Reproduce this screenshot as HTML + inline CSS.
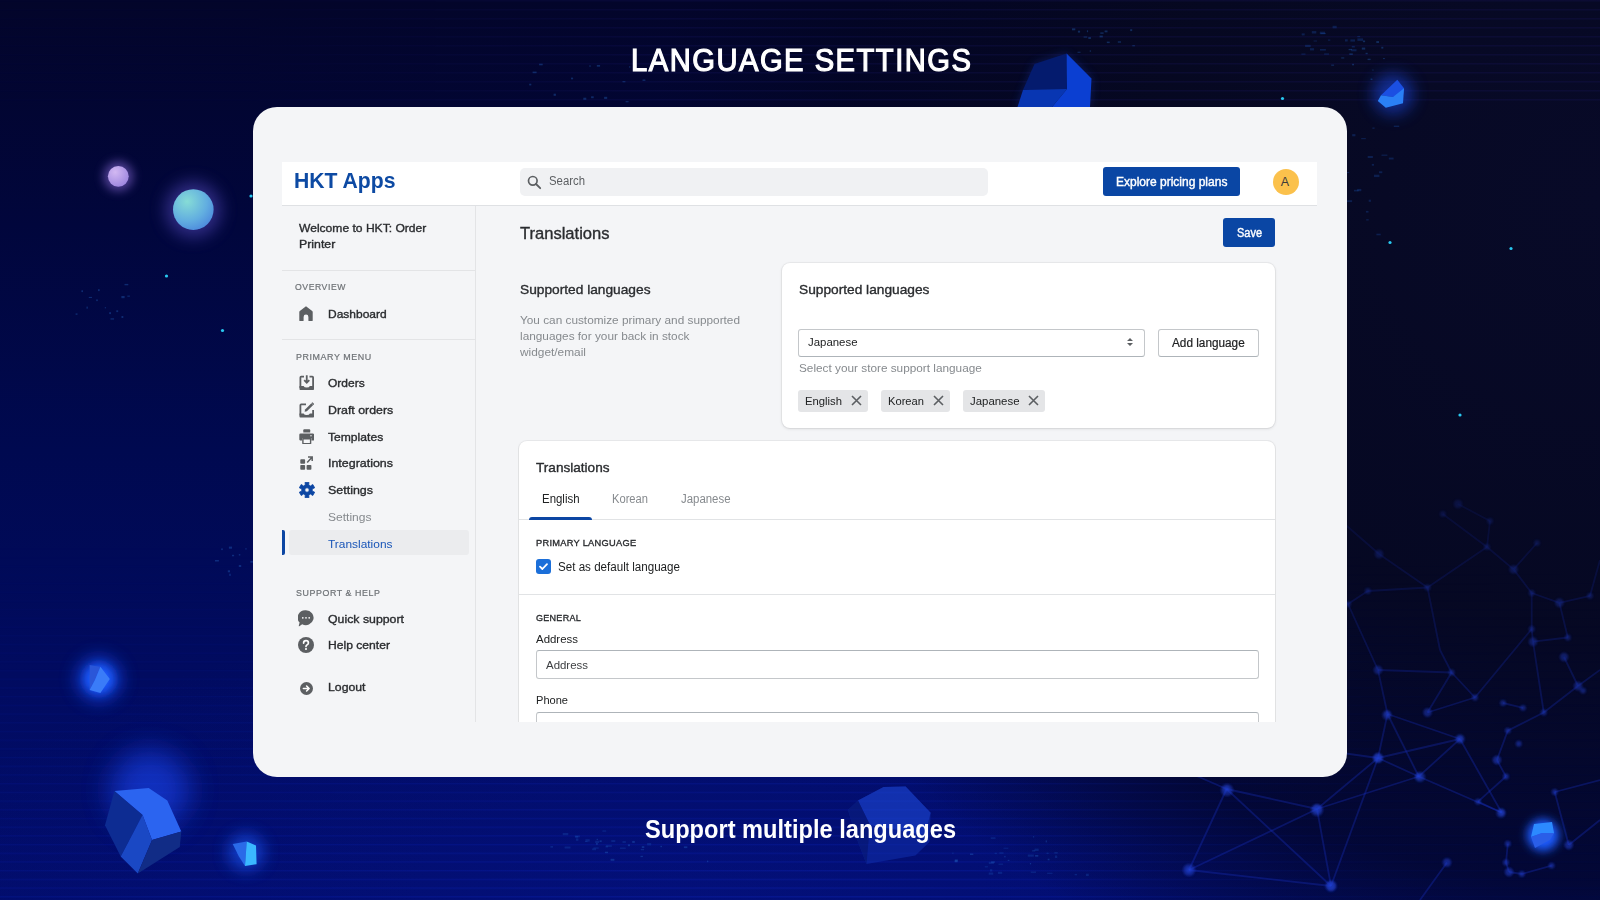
<!DOCTYPE html>
<html><head><meta charset="utf-8"><title>Language Settings</title>
<style>
html,body{margin:0;padding:0;}
body{width:1600px;height:900px;overflow:hidden;position:relative;font-family:"Liberation Sans",sans-serif;
background:#070b2c;}
.bg{position:absolute;left:0;top:0;width:1600px;height:900px;
background:radial-gradient(ellipse 800px 300px at 700px 900px, rgba(8,26,170,0.22) 0%, rgba(8,26,170,0) 100%),linear-gradient(180deg,#03052a 0%,#01063c 25%,#000950 50%,#010b60 75%,#020d6c 100%);}
.bg2{position:absolute;left:0;top:0;width:1600px;height:900px;
background:radial-gradient(ellipse 950px 850px at 1600px 200px, rgba(8,10,40,1) 0%, rgba(6,8,32,0.95) 50%, rgba(3,5,34,0.72) 80%, rgba(3,5,34,0) 100%);}
.t{position:absolute;white-space:nowrap;line-height:1;transform-origin:0 0;}
.abs{position:absolute;box-sizing:border-box;}
.panel{left:253px;top:107px;width:1094px;height:670px;border-radius:24px;background:#f4f5f7;}
.clip{left:282px;top:162px;width:1035px;height:560px;overflow:hidden;}
</style></head>
<body>
<div class="bg"></div>
<div class="bg2"></div>

<svg class="abs" style="left:0;top:0" width="1600" height="900" viewBox="0 0 1600 900">
<defs>
 <filter id="gl" x="-100%" y="-100%" width="300%" height="300%"><feGaussianBlur stdDeviation="8"/></filter>
 <filter id="nb" x="-50%" y="-50%" width="200%" height="200%"><feGaussianBlur stdDeviation="1.2"/></filter>
 <filter id="gl2" x="-100%" y="-100%" width="300%" height="300%"><feGaussianBlur stdDeviation="5"/></filter>
 <filter id="gl3" x="-100%" y="-100%" width="300%" height="300%"><feGaussianBlur stdDeviation="14"/></filter>
 <radialGradient id="sp1" cx="35%" cy="30%" r="75%"><stop offset="0" stop-color="#d2b8f2"/><stop offset="1" stop-color="#9d86df"/></radialGradient>
 <radialGradient id="sp2" cx="35%" cy="30%" r="80%"><stop offset="0" stop-color="#86dcd6"/><stop offset="0.6" stop-color="#62aee0"/><stop offset="1" stop-color="#4a86dc"/></radialGradient>
 <linearGradient id="stripes" x1="0" y1="0" x2="0" y2="1"><stop offset="0" stop-color="#fff"/><stop offset="1" stop-color="#fff"/></linearGradient>
 <linearGradient id="nmg" gradientUnits="userSpaceOnUse" x1="0" y1="470" x2="0" y2="760"><stop offset="0" stop-color="#fff" stop-opacity="0.25"/><stop offset="1" stop-color="#fff" stop-opacity="1"/></linearGradient>
 <mask id="nm" maskUnits="userSpaceOnUse" x="0" y="0" width="1600" height="900"><rect x="0" y="0" width="1600" height="900" fill="url(#nmg)"/></mask>
 <pattern id="hl" width="1600" height="8.7" patternUnits="userSpaceOnUse"><rect x="0" y="0" width="1600" height="1.4" fill="#1430e8"/></pattern>
 <linearGradient id="hlg" gradientUnits="userSpaceOnUse" x1="0" y1="540" x2="0" y2="900"><stop offset="0" stop-color="#fff" stop-opacity="0"/><stop offset="1" stop-color="#fff" stop-opacity="0.55"/></linearGradient>
 <linearGradient id="hlx" gradientUnits="userSpaceOnUse" x1="0" y1="0" x2="1600" y2="0"><stop offset="0" stop-color="#fff" stop-opacity="0.6"/><stop offset="0.55" stop-color="#fff" stop-opacity="1"/><stop offset="0.85" stop-color="#fff" stop-opacity="0.25"/><stop offset="1" stop-color="#fff" stop-opacity="0.1"/></linearGradient>
 <mask id="hlm" maskUnits="userSpaceOnUse" x="0" y="0" width="1600" height="900"><rect x="0" y="540" width="1600" height="360" fill="url(#hlg)"/></mask>
 <mask id="hlm2" maskUnits="userSpaceOnUse" x="0" y="0" width="1600" height="900"><rect x="0" y="0" width="1600" height="900" fill="url(#hlx)"/></mask>
 <linearGradient id="tsg" gradientUnits="userSpaceOnUse" x1="250" y1="0" x2="700" y2="0"><stop offset="0" stop-color="#fff" stop-opacity="0.15"/><stop offset="1" stop-color="#fff" stop-opacity="1"/></linearGradient>
 <mask id="tsm" maskUnits="userSpaceOnUse" x="0" y="0" width="1600" height="900"><rect x="0" y="0" width="1600" height="107" fill="url(#tsg)"/></mask>
 <pattern id="hlt" width="1600" height="9" patternUnits="userSpaceOnUse"><rect x="0" y="0" width="1600" height="1.5" fill="rgba(40,36,150,0.14)"/></pattern>
</defs>
<g mask="url(#hlm2)"><g mask="url(#hlm)"><rect x="0" y="540" width="1600" height="360" fill="url(#hl)" opacity="0.4"/></g></g><rect x="0" y="0" width="1600" height="107" fill="url(#hlt)" mask="url(#tsm)"/>
<g mask="url(#nm)"><g stroke="rgba(25,50,200,0.32)" stroke-width="1.8" fill="none"><line x1="1378" y1="670" x2="1451.6" y2="672.5"/><line x1="1451.6" y1="672.5" x2="1475" y2="697.5"/><line x1="1451.6" y1="672.5" x2="1427.5" y2="712.5"/><line x1="1427.5" y1="712.5" x2="1475" y2="697.5"/><line x1="1378" y1="670" x2="1387.5" y2="714"/><line x1="1387.5" y1="714" x2="1460" y2="739"/><line x1="1387.5" y1="714" x2="1378" y2="758"/><line x1="1387.5" y1="714" x2="1418.75" y2="776.5"/><line x1="1378" y1="758" x2="1460" y2="739"/><line x1="1460" y1="739" x2="1418.75" y2="776.5"/><line x1="1378" y1="758" x2="1418.75" y2="776.5"/><line x1="1460" y1="739" x2="1501.6" y2="812.5"/><line x1="1418.75" y1="776.5" x2="1501.6" y2="812.5"/><line x1="1378" y1="758" x2="1317" y2="809"/><line x1="1418.75" y1="776.5" x2="1317" y2="809"/><line x1="1226.6" y1="789" x2="1317" y2="809"/><line x1="1317" y1="809" x2="1189" y2="870"/><line x1="1317" y1="809" x2="1331" y2="886"/><line x1="1226.6" y1="789" x2="1331" y2="886"/><line x1="1189" y1="870" x2="1331" y2="886"/><line x1="1378" y1="758" x2="1331" y2="886"/><line x1="1226.6" y1="789" x2="1189" y2="870"/><line x1="1378" y1="670" x2="1348" y2="604"/><line x1="1378" y1="758" x2="1250" y2="740"/><line x1="1507.8" y1="730.6" x2="1496.9" y2="760"/><line x1="1496.9" y1="760" x2="1506" y2="776.5"/><line x1="1507.8" y1="730.6" x2="1543.75" y2="712.5"/><line x1="1543.75" y1="712.5" x2="1578" y2="686"/><line x1="1506" y1="776.5" x2="1478" y2="801.6"/><line x1="1478" y1="801.6" x2="1501.6" y2="812.5"/><line x1="1554.7" y1="792" x2="1568.75" y2="845"/><line x1="1554.7" y1="792" x2="1600" y2="780"/><line x1="1507.8" y1="843.75" x2="1506" y2="862.5"/><line x1="1506" y1="862.5" x2="1509" y2="872"/><line x1="1509" y1="872" x2="1521.9" y2="874"/><line x1="1521.9" y1="874" x2="1551.6" y2="865.6"/><line x1="1447" y1="862.5" x2="1420" y2="900"/><line x1="1503" y1="703" x2="1523" y2="707.8"/><line x1="1564" y1="657" x2="1578" y2="686"/><line x1="1578" y1="686" x2="1600" y2="670"/><line x1="1568.75" y1="845" x2="1600" y2="820"/><line x1="1487" y1="547" x2="1513.6" y2="569.4"/><line x1="1427.5" y1="587.5" x2="1367.8" y2="591"/><line x1="1487" y1="547" x2="1427.5" y2="587.5"/><line x1="1379" y1="554" x2="1427.5" y2="587.5"/><line x1="1513.6" y1="569.4" x2="1537" y2="543"/><line x1="1513.6" y1="569.4" x2="1531.7" y2="593"/><line x1="1531.7" y1="593" x2="1531.7" y2="629"/><line x1="1531.7" y1="629" x2="1533" y2="641.7"/><line x1="1531.7" y1="593" x2="1559.4" y2="602.8"/><line x1="1559.4" y1="602.8" x2="1590" y2="595.8"/><line x1="1559.4" y1="602.8" x2="1567.8" y2="637.5"/><line x1="1533" y1="641.7" x2="1567.8" y2="637.5"/><line x1="1490" y1="521" x2="1487" y2="547"/><line x1="1458" y1="504" x2="1490" y2="521"/><line x1="1442.8" y1="514" x2="1487" y2="547"/><line x1="1367.8" y1="591" x2="1348" y2="604"/><line x1="1427.5" y1="587.5" x2="1440" y2="650"/><line x1="1451.6" y1="672.5" x2="1440" y2="650"/><line x1="1531.7" y1="629" x2="1475" y2="697.5"/><line x1="1533" y1="641.7" x2="1543.75" y2="712.5"/><line x1="1590" y1="595.8" x2="1600" y2="560"/><line x1="1348" y1="604" x2="1300" y2="560"/><line x1="1300" y1="560" x2="1260" y2="520"/><line x1="1379" y1="554" x2="1340" y2="520"/><line x1="1226.6" y1="789" x2="1160" y2="760"/></g>
<g fill="rgba(35,65,215,0.5)" filter="url(#nb)"><circle cx="1378" cy="670" r="4.2"/><circle cx="1451.6" cy="672.5" r="2.9"/><circle cx="1475" cy="697.5" r="2.9"/><circle cx="1427.5" cy="712.5" r="4.2"/><circle cx="1387.5" cy="714" r="2.9"/><circle cx="1460" cy="739" r="2.9"/><circle cx="1378" cy="758" r="4.2"/><circle cx="1418.75" cy="776.5" r="2.9"/><circle cx="1226.6" cy="789" r="2.9"/><circle cx="1317" cy="809" r="4.2"/><circle cx="1501.6" cy="812.5" r="2.9"/><circle cx="1189" cy="870" r="2.9"/><circle cx="1331" cy="886" r="4.2"/><circle cx="1507.8" cy="730.6" r="2.9"/><circle cx="1518.75" cy="743.75" r="2.9"/><circle cx="1496.9" cy="760" r="4.2"/><circle cx="1506" cy="776.5" r="2.9"/><circle cx="1543.75" cy="712.5" r="2.9"/><circle cx="1578" cy="686" r="4.2"/><circle cx="1478" cy="801.6" r="2.9"/><circle cx="1554.7" cy="792" r="2.9"/><circle cx="1568.75" cy="845" r="4.2"/><circle cx="1507.8" cy="843.75" r="2.9"/><circle cx="1506" cy="862.5" r="2.9"/><circle cx="1509" cy="872" r="4.2"/><circle cx="1521.9" cy="874" r="2.9"/><circle cx="1551.6" cy="865.6" r="2.9"/><circle cx="1447" cy="862.5" r="4.2"/><circle cx="1503" cy="703" r="2.9"/><circle cx="1523" cy="707.8" r="2.9"/><circle cx="1564" cy="657" r="4.2"/><circle cx="1583" cy="690.6" r="2.9"/><circle cx="1487" cy="547" r="2.9"/><circle cx="1513.6" cy="569.4" r="4.2"/><circle cx="1427.5" cy="587.5" r="2.9"/><circle cx="1367.8" cy="591" r="2.9"/><circle cx="1379" cy="554" r="4.2"/><circle cx="1537" cy="543" r="2.9"/><circle cx="1531.7" cy="593" r="2.9"/><circle cx="1559.4" cy="602.8" r="4.2"/><circle cx="1590" cy="595.8" r="2.9"/><circle cx="1531.7" cy="629" r="2.9"/><circle cx="1533" cy="641.7" r="4.2"/><circle cx="1567.8" cy="637.5" r="2.9"/><circle cx="1490" cy="521" r="2.9"/><circle cx="1458" cy="504" r="4.2"/><circle cx="1442.8" cy="514" r="2.9"/><circle cx="1348" cy="604" r="2.9"/></g><g fill="rgba(40,70,220,0.45)" filter="url(#nb)"><circle cx="1227" cy="790" r="6"/><circle cx="1317" cy="810" r="6"/><circle cx="1189" cy="870" r="6"/><circle cx="1331" cy="886" r="5.5"/><circle cx="1378" cy="758" r="5"/><circle cx="1420" cy="777" r="5"/><circle cx="1387" cy="715" r="4.5"/><circle cx="1460" cy="739" r="4.5"/><circle cx="1501" cy="813" r="4.5"/></g></g>
<circle cx="166.5" cy="276" r="1.6" fill="#28c8f0"/><circle cx="222.5" cy="330.5" r="1.6" fill="#28c8f0"/><circle cx="251" cy="196" r="1.6" fill="#28c8f0"/><circle cx="1282.5" cy="98.5" r="1.6" fill="#28c8f0"/><circle cx="1390" cy="242.5" r="1.6" fill="#28c8f0"/><circle cx="1511" cy="248.5" r="1.6" fill="#28c8f0"/><circle cx="1460" cy="415" r="1.6" fill="#28c8f0"/><circle cx="1224" cy="363" r="1.6" fill="#28c8f0"/><rect x="529.2" y="83.7" width="2.1" height="1.7" fill="rgba(40,110,200,0.35)"/><rect x="589.5" y="65.1" width="1.0" height="2.0" fill="rgba(40,110,200,0.35)"/><rect x="532.6" y="71.6" width="4.0" height="1.6" fill="rgba(40,110,200,0.35)"/><rect x="622.5" y="81.1" width="2.9" height="1.2" fill="rgba(40,110,200,0.35)"/><rect x="591.1" y="96.3" width="2.6" height="1.9" fill="rgba(40,110,200,0.35)"/><rect x="596.8" y="65.0" width="3.3" height="1.7" fill="rgba(40,110,200,0.35)"/><rect x="539.1" y="63.7" width="3.6" height="1.6" fill="rgba(40,110,200,0.35)"/><rect x="604.1" y="96.8" width="3.1" height="2.1" fill="rgba(40,110,200,0.35)"/><rect x="553.6" y="93.7" width="2.3" height="2.1" fill="rgba(40,110,200,0.35)"/><rect x="629.0" y="66.3" width="1.4" height="1.3" fill="rgba(40,110,200,0.35)"/><rect x="642.5" y="79.5" width="2.9" height="1.4" fill="rgba(40,110,200,0.35)"/><rect x="571.0" y="77.6" width="2.1" height="1.7" fill="rgba(40,110,200,0.35)"/><rect x="583.3" y="97.7" width="3.0" height="2.1" fill="rgba(40,110,200,0.35)"/><rect x="625.6" y="101.1" width="3.0" height="1.2" fill="rgba(40,110,200,0.35)"/><rect x="1182.5" y="177.9" width="3.7" height="1.7" fill="rgba(40,110,200,0.35)"/><rect x="1169.2" y="132.7" width="3.5" height="1.7" fill="rgba(40,110,200,0.35)"/><rect x="1130.6" y="123.8" width="3.6" height="2.2" fill="rgba(40,110,200,0.35)"/><rect x="1113.0" y="168.0" width="2.2" height="1.2" fill="rgba(40,110,200,0.35)"/><rect x="1131.5" y="166.1" width="3.6" height="1.1" fill="rgba(40,110,200,0.35)"/><rect x="1160.3" y="122.7" width="3.2" height="1.4" fill="rgba(40,110,200,0.35)"/><rect x="1184.3" y="178.8" width="2.5" height="2.2" fill="rgba(40,110,200,0.35)"/><rect x="1132.9" y="124.6" width="2.8" height="1.0" fill="rgba(40,110,200,0.35)"/><rect x="1122.8" y="144.5" width="2.8" height="1.2" fill="rgba(40,110,200,0.35)"/><rect x="1108.8" y="172.1" width="1.9" height="2.2" fill="rgba(40,110,200,0.35)"/><rect x="1185.7" y="142.7" width="2.4" height="1.6" fill="rgba(40,110,200,0.35)"/><rect x="1162.9" y="155.7" width="2.7" height="1.7" fill="rgba(40,110,200,0.35)"/><rect x="1189.7" y="150.4" width="2.3" height="1.9" fill="rgba(40,110,200,0.35)"/><rect x="1126.4" y="138.1" width="3.9" height="1.6" fill="rgba(40,110,200,0.35)"/><rect x="1362.9" y="40.5" width="2.2" height="1.7" fill="rgba(40,110,200,0.35)"/><rect x="1331.2" y="64.6" width="2.9" height="1.1" fill="rgba(40,110,200,0.35)"/><rect x="1367.6" y="58.7" width="3.0" height="1.4" fill="rgba(40,110,200,0.35)"/><rect x="1372.4" y="69.5" width="1.1" height="1.1" fill="rgba(40,110,200,0.35)"/><rect x="1370.6" y="78.5" width="1.8" height="1.5" fill="rgba(40,110,200,0.35)"/><rect x="1365.6" y="52.8" width="2.1" height="1.4" fill="rgba(40,110,200,0.35)"/><rect x="1352.1" y="63.8" width="1.9" height="1.5" fill="rgba(40,110,200,0.35)"/><rect x="1376.3" y="41.1" width="2.7" height="1.9" fill="rgba(40,110,200,0.35)"/><rect x="1348.6" y="48.9" width="3.4" height="1.3" fill="rgba(40,110,200,0.35)"/><rect x="1341.2" y="57.4" width="3.1" height="1.1" fill="rgba(40,110,200,0.35)"/><rect x="1349.3" y="53.4" width="3.5" height="1.5" fill="rgba(40,110,200,0.35)"/><rect x="1381.3" y="46.8" width="2.0" height="1.8" fill="rgba(40,110,200,0.35)"/><rect x="1383.1" y="58.0" width="1.7" height="1.1" fill="rgba(40,110,200,0.35)"/><rect x="1361.8" y="47.6" width="3.4" height="2.0" fill="rgba(40,110,200,0.35)"/><rect x="1227.9" y="368.9" width="3.4" height="1.8" fill="rgba(40,110,200,0.35)"/><rect x="1271.4" y="372.3" width="1.4" height="1.4" fill="rgba(40,110,200,0.35)"/><rect x="1270.6" y="368.6" width="2.0" height="1.5" fill="rgba(40,110,200,0.35)"/><rect x="1244.4" y="375.5" width="3.8" height="1.2" fill="rgba(40,110,200,0.35)"/><rect x="1215.3" y="402.2" width="3.6" height="2.2" fill="rgba(40,110,200,0.35)"/><rect x="1245.4" y="402.5" width="3.8" height="1.3" fill="rgba(40,110,200,0.35)"/><rect x="1267.2" y="396.8" width="3.0" height="1.6" fill="rgba(40,110,200,0.35)"/><rect x="1235.2" y="372.1" width="1.7" height="1.1" fill="rgba(40,110,200,0.35)"/><rect x="1256.2" y="369.4" width="3.4" height="1.1" fill="rgba(40,110,200,0.35)"/><rect x="1278.3" y="389.7" width="3.8" height="2.1" fill="rgba(40,110,200,0.35)"/><rect x="1278.0" y="383.8" width="1.0" height="1.9" fill="rgba(40,110,200,0.35)"/><rect x="1227.0" y="370.0" width="3.0" height="1.6" fill="rgba(40,110,200,0.35)"/><rect x="1244.0" y="402.0" width="2.8" height="1.4" fill="rgba(40,110,200,0.35)"/><rect x="1232.7" y="398.1" width="2.4" height="1.9" fill="rgba(40,110,200,0.35)"/><rect x="632.2" y="840.9" width="2.6" height="2.0" fill="rgba(40,110,200,0.35)"/><rect x="610.6" y="858.8" width="3.8" height="2.0" fill="rgba(40,110,200,0.35)"/><rect x="688.8" y="835.2" width="2.9" height="2.0" fill="rgba(40,110,200,0.35)"/><rect x="596.0" y="843.1" width="1.8" height="1.6" fill="rgba(40,110,200,0.35)"/><rect x="640.8" y="849.2" width="3.3" height="1.0" fill="rgba(40,110,200,0.35)"/><rect x="596.6" y="838.8" width="1.4" height="1.1" fill="rgba(40,110,200,0.35)"/><rect x="707.0" y="860.6" width="1.3" height="1.6" fill="rgba(40,110,200,0.35)"/><rect x="627.9" y="844.4" width="2.1" height="1.8" fill="rgba(40,110,200,0.35)"/><rect x="660.4" y="845.8" width="1.6" height="1.4" fill="rgba(40,110,200,0.35)"/><rect x="604.9" y="851.7" width="3.1" height="1.5" fill="rgba(40,110,200,0.35)"/><rect x="599.6" y="840.4" width="2.1" height="1.7" fill="rgba(40,110,200,0.35)"/><rect x="683.9" y="846.4" width="3.4" height="1.7" fill="rgba(40,110,200,0.35)"/><rect x="641.8" y="846.2" width="2.5" height="1.8" fill="rgba(40,110,200,0.35)"/><rect x="640.5" y="855.8" width="2.4" height="1.3" fill="rgba(40,110,200,0.35)"/><rect x="1004.3" y="855.9" width="1.2" height="1.5" fill="rgba(40,110,200,0.35)"/><rect x="991.1" y="861.4" width="3.8" height="1.4" fill="rgba(40,110,200,0.35)"/><rect x="1047.7" y="858.7" width="1.8" height="1.6" fill="rgba(40,110,200,0.35)"/><rect x="954.8" y="859.4" width="3.0" height="2.1" fill="rgba(40,110,200,0.35)"/><rect x="1035.1" y="855.0" width="3.2" height="1.7" fill="rgba(40,110,200,0.35)"/><rect x="952.4" y="852.6" width="1.0" height="1.2" fill="rgba(40,110,200,0.35)"/><rect x="1032.9" y="836.3" width="1.3" height="1.1" fill="rgba(40,110,200,0.35)"/><rect x="1045.7" y="840.4" width="1.1" height="2.0" fill="rgba(40,110,200,0.35)"/><rect x="954.6" y="860.3" width="3.0" height="2.0" fill="rgba(40,110,200,0.35)"/><rect x="1054.3" y="852.4" width="3.4" height="1.0" fill="rgba(40,110,200,0.35)"/><rect x="1032.1" y="850.3" width="3.1" height="1.1" fill="rgba(40,110,200,0.35)"/><rect x="1029.9" y="863.0" width="1.2" height="1.4" fill="rgba(40,110,200,0.35)"/><rect x="1007.7" y="859.8" width="1.7" height="1.2" fill="rgba(40,110,200,0.35)"/><rect x="970.0" y="853.5" width="3.3" height="1.5" fill="rgba(40,110,200,0.35)"/><rect x="232.0" y="554.8" width="2.1" height="1.5" fill="rgba(40,110,200,0.35)"/><rect x="215.0" y="560.0" width="3.9" height="1.5" fill="rgba(40,110,200,0.35)"/><rect x="254.8" y="543.0" width="3.1" height="1.9" fill="rgba(40,110,200,0.35)"/><rect x="250.4" y="560.9" width="2.5" height="1.8" fill="rgba(40,110,200,0.35)"/><rect x="263.8" y="542.5" width="1.3" height="1.9" fill="rgba(40,110,200,0.35)"/><rect x="265.0" y="560.9" width="2.3" height="1.9" fill="rgba(40,110,200,0.35)"/><rect x="221.2" y="548.4" width="1.6" height="1.7" fill="rgba(40,110,200,0.35)"/><rect x="228.9" y="546.6" width="3.1" height="2.1" fill="rgba(40,110,200,0.35)"/><rect x="227.8" y="570.3" width="2.2" height="2.0" fill="rgba(40,110,200,0.35)"/><rect x="245.1" y="548.4" width="1.7" height="1.0" fill="rgba(40,110,200,0.35)"/><rect x="238.8" y="554.1" width="1.5" height="1.4" fill="rgba(40,110,200,0.35)"/><rect x="229.3" y="573.7" width="1.4" height="2.2" fill="rgba(40,110,200,0.35)"/><rect x="238.8" y="565.0" width="2.4" height="2.0" fill="rgba(40,110,200,0.35)"/><rect x="259.3" y="562.9" width="2.4" height="1.9" fill="rgba(40,110,200,0.35)"/><rect x="121.4" y="296.0" width="3.2" height="2.2" fill="rgba(40,110,200,0.35)"/><rect x="98.0" y="289.2" width="1.7" height="1.9" fill="rgba(40,110,200,0.35)"/><rect x="110.5" y="318.3" width="3.6" height="1.3" fill="rgba(40,110,200,0.35)"/><rect x="81.4" y="290.3" width="1.6" height="1.8" fill="rgba(40,110,200,0.35)"/><rect x="121.5" y="316.0" width="1.8" height="2.0" fill="rgba(40,110,200,0.35)"/><rect x="88.8" y="296.9" width="3.2" height="1.1" fill="rgba(40,110,200,0.35)"/><rect x="75.6" y="313.4" width="1.9" height="1.4" fill="rgba(40,110,200,0.35)"/><rect x="104.8" y="307.0" width="1.0" height="1.4" fill="rgba(40,110,200,0.35)"/><rect x="96.2" y="299.4" width="1.6" height="1.7" fill="rgba(40,110,200,0.35)"/><rect x="127.3" y="295.6" width="2.6" height="1.1" fill="rgba(40,110,200,0.35)"/><rect x="86.5" y="306.6" width="1.3" height="2.1" fill="rgba(40,110,200,0.35)"/><rect x="124.5" y="283.9" width="3.8" height="1.4" fill="rgba(40,110,200,0.35)"/><rect x="116.3" y="310.3" width="1.9" height="1.8" fill="rgba(40,110,200,0.35)"/><rect x="109.2" y="312.2" width="1.8" height="1.9" fill="rgba(40,110,200,0.35)"/><rect x="1132.3" y="45.2" width="2.6" height="1.1" fill="rgba(40,110,200,0.35)"/><rect x="1099.6" y="35.6" width="3.2" height="1.8" fill="rgba(40,110,200,0.35)"/><rect x="1104.6" y="30.5" width="2.9" height="1.8" fill="rgba(40,110,200,0.35)"/><rect x="1077.5" y="51.7" width="3.0" height="1.1" fill="rgba(40,110,200,0.35)"/><rect x="1130.2" y="29.2" width="2.0" height="1.9" fill="rgba(40,110,200,0.35)"/><rect x="1106.8" y="41.6" width="2.9" height="1.5" fill="rgba(40,110,200,0.35)"/><rect x="1086.9" y="30.3" width="1.2" height="1.9" fill="rgba(40,110,200,0.35)"/><rect x="1117.8" y="41.3" width="3.2" height="1.4" fill="rgba(40,110,200,0.35)"/><rect x="1083.6" y="36.5" width="3.6" height="1.1" fill="rgba(40,110,200,0.35)"/><rect x="1100.3" y="32.4" width="3.3" height="1.4" fill="rgba(40,110,200,0.35)"/><rect x="1088.3" y="37.1" width="2.6" height="1.9" fill="rgba(40,110,200,0.35)"/><rect x="1089.7" y="50.4" width="1.3" height="1.3" fill="rgba(40,110,200,0.35)"/><rect x="1072.0" y="28.4" width="3.3" height="1.9" fill="rgba(40,110,200,0.35)"/><rect x="1077.9" y="30.7" width="2.2" height="1.9" fill="rgba(40,110,200,0.35)"/><rect x="1361.2" y="138.1" width="4.6" height="1.1" fill="rgba(30,90,190,0.28)"/><rect x="1371.8" y="163.9" width="2.2" height="1.8" fill="rgba(30,90,190,0.28)"/><rect x="1346.9" y="172.0" width="2.3" height="1.1" fill="rgba(30,90,190,0.28)"/><rect x="1366.2" y="219.2" width="2.5" height="1.3" fill="rgba(30,90,190,0.28)"/><rect x="1376.4" y="233.7" width="4.3" height="1.6" fill="rgba(30,90,190,0.28)"/><rect x="1393.8" y="125.6" width="5.4" height="1.4" fill="rgba(30,90,190,0.28)"/><rect x="1352.2" y="134.1" width="3.2" height="2.2" fill="rgba(30,90,190,0.28)"/><rect x="1354.0" y="189.8" width="4.6" height="1.6" fill="rgba(30,90,190,0.28)"/><rect x="1372.4" y="127.5" width="2.2" height="1.3" fill="rgba(30,90,190,0.28)"/><rect x="1379.0" y="171.3" width="3.3" height="1.9" fill="rgba(30,90,190,0.28)"/><rect x="1367.7" y="156.0" width="5.2" height="2.0" fill="rgba(30,90,190,0.28)"/><rect x="1357.2" y="188.9" width="4.1" height="2.3" fill="rgba(30,90,190,0.28)"/><rect x="1381.5" y="154.6" width="5.9" height="1.2" fill="rgba(30,90,190,0.28)"/><rect x="1365.9" y="210.9" width="2.6" height="1.7" fill="rgba(30,90,190,0.28)"/><rect x="1347.0" y="200.2" width="5.1" height="1.9" fill="rgba(30,90,190,0.28)"/><rect x="1388.8" y="157.6" width="4.8" height="1.9" fill="rgba(30,90,190,0.28)"/><rect x="1374.0" y="174.7" width="5.4" height="2.4" fill="rgba(30,90,190,0.28)"/><rect x="1368.7" y="199.7" width="2.2" height="2.1" fill="rgba(30,90,190,0.28)"/><rect x="1188.8" y="149.7" width="5.3" height="1.4" fill="rgba(30,90,190,0.28)"/><rect x="1173.1" y="136.7" width="2.1" height="1.7" fill="rgba(30,90,190,0.28)"/><rect x="1160.1" y="114.7" width="2.2" height="2.2" fill="rgba(30,90,190,0.28)"/><rect x="1157.8" y="119.9" width="3.6" height="2.3" fill="rgba(30,90,190,0.28)"/><rect x="1154.8" y="128.0" width="4.2" height="2.3" fill="rgba(30,90,190,0.28)"/><rect x="1199.2" y="144.6" width="3.1" height="1.6" fill="rgba(30,90,190,0.28)"/><rect x="1171.5" y="145.4" width="5.8" height="1.2" fill="rgba(30,90,190,0.28)"/><rect x="1160.6" y="119.3" width="2.9" height="1.7" fill="rgba(30,90,190,0.28)"/><rect x="1185.3" y="120.5" width="2.0" height="1.6" fill="rgba(30,90,190,0.28)"/><rect x="1172.2" y="132.7" width="5.8" height="2.0" fill="rgba(30,90,190,0.28)"/><rect x="1180.9" y="134.7" width="4.7" height="1.1" fill="rgba(30,90,190,0.28)"/><rect x="1204.0" y="141.2" width="5.5" height="2.2" fill="rgba(30,90,190,0.28)"/><rect x="1173.5" y="126.0" width="2.4" height="2.0" fill="rgba(30,90,190,0.28)"/><rect x="1153.7" y="112.7" width="2.8" height="1.2" fill="rgba(30,90,190,0.28)"/><rect x="1170.4" y="112.1" width="2.0" height="1.2" fill="rgba(30,90,190,0.28)"/><rect x="1156.1" y="124.5" width="2.1" height="2.3" fill="rgba(30,90,190,0.28)"/><rect x="1186.8" y="115.9" width="3.0" height="1.5" fill="rgba(30,90,190,0.28)"/><rect x="1171.8" y="114.9" width="5.4" height="2.5" fill="rgba(30,90,190,0.28)"/><rect x="1328.0" y="39.5" width="2.3" height="1.2" fill="rgba(30,90,190,0.28)"/><rect x="1320.6" y="32.9" width="5.3" height="1.2" fill="rgba(30,90,190,0.28)"/><rect x="1301.4" y="53.5" width="4.1" height="1.2" fill="rgba(30,90,190,0.28)"/><rect x="1332.6" y="25.8" width="4.1" height="2.5" fill="rgba(30,90,190,0.28)"/><rect x="1351.8" y="45.9" width="3.0" height="1.6" fill="rgba(30,90,190,0.28)"/><rect x="1310.0" y="48.2" width="4.1" height="2.2" fill="rgba(30,90,190,0.28)"/><rect x="1319.8" y="31.7" width="5.2" height="2.5" fill="rgba(30,90,190,0.28)"/><rect x="1351.2" y="49.2" width="5.3" height="2.1" fill="rgba(30,90,190,0.28)"/><rect x="1313.6" y="40.5" width="3.4" height="1.0" fill="rgba(30,90,190,0.28)"/><rect x="1301.7" y="33.4" width="3.0" height="2.0" fill="rgba(30,90,190,0.28)"/><rect x="1357.4" y="38.4" width="5.7" height="2.5" fill="rgba(30,90,190,0.28)"/><rect x="1357.3" y="35.9" width="2.9" height="1.3" fill="rgba(30,90,190,0.28)"/><rect x="1311.8" y="31.1" width="4.5" height="2.4" fill="rgba(30,90,190,0.28)"/><rect x="1350.4" y="39.4" width="4.6" height="2.2" fill="rgba(30,90,190,0.28)"/><rect x="1305.1" y="44.8" width="5.6" height="2.2" fill="rgba(30,90,190,0.28)"/><rect x="1345.0" y="39.3" width="2.7" height="2.2" fill="rgba(30,90,190,0.28)"/><rect x="1320.0" y="49.0" width="5.9" height="1.6" fill="rgba(30,90,190,0.28)"/><rect x="1324.1" y="53.4" width="4.9" height="1.3" fill="rgba(30,90,190,0.28)"/><rect x="562.7" y="833.0" width="5.6" height="2.2" fill="rgba(30,90,190,0.28)"/><rect x="564.6" y="846.5" width="5.9" height="2.0" fill="rgba(30,90,190,0.28)"/><rect x="585.0" y="841.0" width="2.5" height="1.0" fill="rgba(30,90,190,0.28)"/><rect x="647.1" y="843.0" width="4.1" height="2.4" fill="rgba(30,90,190,0.28)"/><rect x="593.4" y="847.4" width="5.3" height="1.3" fill="rgba(30,90,190,0.28)"/><rect x="575.2" y="835.9" width="3.0" height="1.9" fill="rgba(30,90,190,0.28)"/><rect x="575.9" y="838.4" width="2.5" height="2.4" fill="rgba(30,90,190,0.28)"/><rect x="585.4" y="839.2" width="4.3" height="2.4" fill="rgba(30,90,190,0.28)"/><rect x="592.1" y="848.4" width="4.0" height="1.8" fill="rgba(30,90,190,0.28)"/><rect x="602.4" y="830.4" width="3.8" height="1.3" fill="rgba(30,90,190,0.28)"/><rect x="550.4" y="846.0" width="2.7" height="1.7" fill="rgba(30,90,190,0.28)"/><rect x="622.5" y="841.1" width="3.3" height="1.8" fill="rgba(30,90,190,0.28)"/><rect x="605.5" y="845.7" width="2.4" height="1.8" fill="rgba(30,90,190,0.28)"/><rect x="574.8" y="835.5" width="5.1" height="1.8" fill="rgba(30,90,190,0.28)"/><rect x="606.2" y="845.2" width="5.6" height="1.7" fill="rgba(30,90,190,0.28)"/><rect x="611.3" y="840.1" width="4.0" height="2.0" fill="rgba(30,90,190,0.28)"/><rect x="595.2" y="840.7" width="3.9" height="2.4" fill="rgba(30,90,190,0.28)"/><rect x="619.9" y="847.5" width="5.8" height="1.4" fill="rgba(30,90,190,0.28)"/><rect x="1047.1" y="872.7" width="5.4" height="1.2" fill="rgba(30,90,190,0.28)"/><rect x="994.6" y="852.7" width="2.3" height="1.4" fill="rgba(30,90,190,0.28)"/><rect x="988.8" y="861.8" width="5.1" height="2.3" fill="rgba(30,90,190,0.28)"/><rect x="998.5" y="863.6" width="4.6" height="1.2" fill="rgba(30,90,190,0.28)"/><rect x="1085.9" y="873.7" width="2.9" height="2.4" fill="rgba(30,90,190,0.28)"/><rect x="1027.8" y="854.5" width="6.0" height="2.2" fill="rgba(30,90,190,0.28)"/><rect x="999.4" y="852.3" width="4.1" height="1.5" fill="rgba(30,90,190,0.28)"/><rect x="1003.5" y="847.7" width="4.9" height="1.0" fill="rgba(30,90,190,0.28)"/><rect x="1046.5" y="852.6" width="2.1" height="1.5" fill="rgba(30,90,190,0.28)"/><rect x="1054.9" y="855.5" width="2.3" height="2.5" fill="rgba(30,90,190,0.28)"/><rect x="1074.6" y="873.9" width="2.4" height="1.4" fill="rgba(30,90,190,0.28)"/><rect x="984.8" y="866.2" width="3.1" height="1.2" fill="rgba(30,90,190,0.28)"/><rect x="1030.7" y="871.5" width="5.3" height="1.4" fill="rgba(30,90,190,0.28)"/><rect x="997.9" y="871.8" width="4.3" height="2.1" fill="rgba(30,90,190,0.28)"/><rect x="990.7" y="837.3" width="4.8" height="1.6" fill="rgba(30,90,190,0.28)"/><rect x="988.7" y="872.5" width="4.5" height="2.2" fill="rgba(30,90,190,0.28)"/><rect x="990.0" y="869.2" width="2.3" height="2.3" fill="rgba(30,90,190,0.28)"/><rect x="1034.5" y="848.6" width="4.2" height="2.4" fill="rgba(30,90,190,0.28)"/>
<!-- spheres -->
<circle cx="118.3" cy="176.3" r="15" fill="#8a6ad8" opacity="0.55" filter="url(#gl2)"/>
<circle cx="118.3" cy="176.3" r="10.4" fill="url(#sp1)"/>
<circle cx="193.3" cy="209.6" r="28" fill="#5b4fc8" opacity="0.5" filter="url(#gl)"/>
<circle cx="193.3" cy="209.6" r="20.3" fill="url(#sp2)"/>
<!-- top crystal -->
<polygon points="1066.6,53.5 1034.5,64 1017.5,107 1090,107 1091.5,78.5" fill="#1a3fc8" opacity="0.35" filter="url(#gl2)"/>
<polygon points="1066.6,53.5 1034.5,64 1023,90 1067,89" fill="#041b6e"/>
<polygon points="1066.6,53.5 1091.5,78.5 1090,107 1052,107 1067,89" fill="#0b3fd2"/>
<polygon points="1023,90 1067,89 1052,107 1017.5,107" fill="#0836b2"/>
<!-- top right small crystal -->
<circle cx="1393" cy="94" r="20" fill="#1a4ef0" opacity="0.55" filter="url(#gl)"/>
<polygon points="1397.3,79.8 1404,88.2 1403,95 1393,97 1381,95.3" fill="#1b4fe2"/>
<polygon points="1381,95.3 1393,97 1404,88.2 1403,103.3 1385.8,107.8 1377.8,101" fill="#2a80f6"/>
<!-- left crystal -->
<circle cx="99" cy="679" r="24" fill="#1450ff" opacity="0.5" filter="url(#gl)"/><circle cx="99" cy="679" r="15" fill="#1a5cff" opacity="1" filter="url(#gl2)"/>
<polygon points="89.6,665 100.4,666.7 95,680 89.6,690" fill="#2a56d8"/>
<polygon points="100.4,666.7 109.8,679 100.4,693 89.6,690 95,680" fill="#3a7cf8"/>
<!-- big crystal -->
<circle cx="150" cy="790" r="40" fill="#1a4cff" opacity="0.55" filter="url(#gl3)"/>
<polygon points="114.4,791 148.7,788 167.3,800.5 181.3,831.6 152,840 142.6,815" fill="#2b64f0"/>
<polygon points="114.4,791 142.6,815 120.7,856.5 105,825.3" fill="#0d2c92"/>
<polygon points="142.6,815 152,840 137.8,873.6 120.7,856.5" fill="#1a48c4"/>
<polygon points="152,840 181.3,831.6 179.8,847 137.8,873.6" fill="#112c86"/>
<!-- small crystal bottom -->
<circle cx="246" cy="852" r="18" fill="#1a5cff" opacity="0.6" filter="url(#gl)"/>
<polygon points="232.7,844 246.7,841.5 245,866 238.9,856.5" fill="#2a6ae8"/>
<polygon points="246.7,841.5 256,845.6 256.6,864.2 245,866" fill="#3ab8ff"/>
<!-- dim crystal -->
<g opacity="0.6">
<polygon points="883.6,787 905.6,786.5 930.6,812.8 929.4,842 915.4,855.6 866.5,864 856.7,838.5 848,810 858,800.6" fill="#0f2ca8"/>
<polygon points="883.6,787 905.6,786.5 930.6,812.8 925,835 870,825 858,800.6" fill="#1d48d8"/>
<polygon points="858,800.6 870,825 866.5,864 856.7,838.5 848,810" fill="#0a1f80"/>
</g>
<!-- bottom right crystal -->
<circle cx="1543" cy="835" r="16" fill="#1a5cff" opacity="1" filter="url(#gl2)"/>
<polygon points="1534,824 1552,822 1554,833 1550,836 1542,833 1531,837" fill="#2c8aff"/>
<polygon points="1531,837 1542,833 1554,833 1550,840 1535,848" fill="#2a5ee8"/>
</svg>

<div class="abs panel"></div>
<!-- header -->
<div class="abs" style="left:282px;top:162px;width:1035px;height:44px;background:#fff;border-bottom:1px solid #dfe1e4;"></div>
<div class="abs" style="left:520px;top:168px;width:468px;height:28px;background:#f0f1f3;border-radius:5px;"></div>
<svg class="abs" style="left:527px;top:175px" width="15" height="15" viewBox="0 0 15 15"><circle cx="5.8" cy="5.8" r="4.3" fill="none" stroke="#5c5f62" stroke-width="1.7"/><line x1="9" y1="9" x2="13.2" y2="13.2" stroke="#5c5f62" stroke-width="1.8" stroke-linecap="round"/></svg>
<div class="abs" style="left:1103px;top:167px;width:137px;height:29px;background:#0a46a4;border-radius:3px;"></div>
<div class="abs" style="left:1272.5px;top:169px;width:26px;height:26px;background:#fbc14c;border-radius:50%;"></div>
<!-- sidebar -->
<div class="abs" style="left:475px;top:206px;width:1px;height:516px;background:#e3e4e6;"></div>
<div class="abs" style="left:282px;top:270px;width:193px;height:1px;background:#e3e4e6;"></div>
<div class="abs" style="left:282px;top:339px;width:193px;height:1px;background:#e3e4e6;"></div>
<div class="abs" style="left:289px;top:530px;width:180px;height:25px;background:#ebecee;border-radius:3px;"></div>
<div class="abs" style="left:282px;top:530px;width:3px;height:25px;background:#0c46a3;border-radius:0 2px 2px 0;"></div>

<svg class="abs" style="left:299px;top:305.5px" width="14" height="15.5" viewBox="0 0 14 15.5"><path d="M7 0.3 L13.2 4.9 Q13.7 5.3 13.7 5.9 V14.2 Q13.7 15.2 12.7 15.2 H10.2 Q9.4 15.2 9.4 14.4 V11 Q9.4 8.6 7 8.6 Q4.6 8.6 4.6 11 V14.4 Q4.6 15.2 3.8 15.2 H1.3 Q0.3 15.2 0.3 14.2 V5.9 Q0.3 5.3 0.8 4.9 Z" fill="#5c5f62"/></svg>
<svg class="abs" style="left:298.5px;top:375px" width="15.5" height="15.5" viewBox="0 0 15.5 15.5"><path d="M5 1.6 H2.2 Q1.4 1.6 1.4 2.4 V13 M14.1 13 V2.4 Q14.1 1.6 13.3 1.6 H10.5" fill="none" stroke="#5c5f62" stroke-width="1.8"/><path d="M7.75 0.3 V7.6 M5.2 5.2 L7.75 7.8 L10.3 5.2" fill="none" stroke="#5c5f62" stroke-width="1.8"/><path d="M0.5 11 H4.6 Q5.3 12.6 7.75 12.6 Q10.2 12.6 10.9 11 H15 V14.3 Q15 15.1 14.2 15.1 H1.3 Q0.5 15.1 0.5 14.3 Z" fill="#5c5f62"/></svg>
<svg class="abs" style="left:298.5px;top:401.5px" width="15.5" height="16" viewBox="0 0 15.5 16"><path d="M7 2.4 H2.2 Q1.4 2.4 1.4 3.2 V13.5 M14.1 13.5 V8" fill="none" stroke="#5c5f62" stroke-width="1.8"/><path d="M5.6 9.8 L6.1 7.6 L12.4 1.3 L14.2 3.1 L7.9 9.3 Z" fill="#5c5f62"/><path d="M13 0.6 L14.9 2.5" stroke="#5c5f62" stroke-width="1.2"/><path d="M0.5 11.5 H4.6 Q5.3 13.1 7.75 13.1 Q10.2 13.1 10.9 11.5 H15 V14.8 Q15 15.6 14.2 15.6 H1.3 Q0.5 15.6 0.5 14.8 Z" fill="#5c5f62"/></svg>
<svg class="abs" style="left:298.5px;top:429px" width="15.5" height="15" viewBox="0 0 15.5 15"><path d="M4.3 1.2 Q4.3 0.3 5.2 0.3 H10.3 Q11.2 0.3 11.2 1.2 V3.4 H4.3 Z" fill="#5c5f62"/><path d="M1.6 4.4 H13.9 Q15.2 4.4 15.2 5.7 V10.6 Q15.2 11.4 14.4 11.4 H12.4 V9 H3.1 V11.4 H1.1 Q0.3 11.4 0.3 10.6 V5.7 Q0.3 4.4 1.6 4.4 Z M12 6 Q11.3 6 11.3 6.7 Q11.3 7.4 12 7.4 Q12.7 7.4 12.7 6.7 Q12.7 6 12 6 Z" fill="#5c5f62" fill-rule="evenodd"/><path d="M3.9 9.8 H11.6 V14.2 Q11.6 14.8 11 14.8 H4.5 Q3.9 14.8 3.9 14.2 Z" fill="none" stroke="#5c5f62" stroke-width="1.4"/></svg>
<svg class="abs" style="left:300px;top:455.5px" width="13" height="14" viewBox="0 0 13 14"><rect x="0.3" y="3.2" width="4.8" height="4.6" rx="0.8" fill="#5c5f62"/><rect x="0.3" y="8.9" width="4.8" height="4.8" rx="0.8" fill="#5c5f62"/><rect x="6.6" y="8.9" width="4.8" height="4.8" rx="0.8" fill="#5c5f62"/><path d="M7.2 6.6 L12 1.2 M8 0.9 H12.2 V5.1" fill="none" stroke="#5c5f62" stroke-width="1.5"/></svg>
<svg class="abs" style="left:298.5px;top:482px" width="16" height="16" viewBox="-8 -8 16 16"><path fill="#0c46a3" fill-rule="evenodd" stroke="#0c46a3" stroke-width="0.8" stroke-linejoin="round" d="M-1.73,-5.01 L-1.94,-7.76 L1.94,-7.76 L1.73,-5.01 L3.48,-4.00 L5.75,-5.56 L7.69,-2.21 L5.20,-1.01 L5.20,1.01 L7.69,2.21 L5.75,5.56 L3.48,4.00 L1.73,5.01 L1.94,7.76 L-1.94,7.76 L-1.73,5.01 L-3.48,4.00 L-5.75,5.56 L-7.69,2.21 L-5.20,1.01 L-5.20,-1.01 L-7.69,-2.21 L-5.75,-5.56 L-3.48,-4.00 Z M0,-2.2 A2.2,2.2 0 1 0 0,2.2 A2.2,2.2 0 1 0 0,-2.2 Z"/></svg>
<svg class="abs" style="left:298px;top:610px" width="16" height="16.5" viewBox="0 0 16 16.5"><path d="M8 0.3 A7.7 7.4 0 1 1 4.2 14.2 L1.3 16.2 Q0.6 16.5 0.8 15.7 L1.6 12.6 A7.7 7.4 0 0 1 8 0.3 Z" fill="#5c5f62"/><circle cx="4.8" cy="7.8" r="0.85" fill="#fff"/><circle cx="8" cy="7.8" r="0.85" fill="#fff"/><circle cx="11.2" cy="7.8" r="0.85" fill="#fff"/></svg>
<svg class="abs" style="left:298px;top:637px" width="16" height="16" viewBox="0 0 16 16"><circle cx="8" cy="8" r="8" fill="#5c5f62"/><path d="M5.6 6.1 Q5.6 3.7 8 3.7 Q10.4 3.7 10.4 5.9 Q10.4 7.2 8.9 7.9 Q8 8.3 8 9.4" fill="none" stroke="#fff" stroke-width="1.7" stroke-linecap="round"/><circle cx="8" cy="12" r="1.05" fill="#fff"/></svg>
<svg class="abs" style="left:299.8px;top:681.5px" width="13" height="13" viewBox="0 0 13 13"><circle cx="6.5" cy="6.5" r="6.5" fill="#5c5f62"/><path d="M3.4 6.5 H9 M6.6 4 L9.1 6.5 L6.6 9" fill="none" stroke="#fff" stroke-width="1.6" stroke-linecap="round" stroke-linejoin="round"/></svg>

<!-- main -->
<div class="abs" style="left:1223px;top:218px;width:52px;height:29px;background:#0a46a4;border-radius:3px;"></div>
<div class="abs" style="left:782px;top:263px;width:493px;height:165px;background:#fff;border-radius:8px;box-shadow:0 0 0 1px rgba(63,63,68,0.05),0 1px 3px 0 rgba(63,63,68,0.15);"></div>
<div class="abs" style="left:798px;top:328.5px;width:346.5px;height:28px;background:#fff;border:1px solid #c4c7ca;border-bottom-color:#aeb4b9;border-radius:3px;"></div>
<svg class="abs" style="left:1126px;top:337px" width="8" height="10" viewBox="0 0 8 10"><path d="M4 1 L7 4 H1 Z M4 9 L1 6 H7 Z" fill="#5c5f62"/></svg>
<div class="abs" style="left:1158px;top:328.5px;width:101px;height:28px;background:#fff;border:1px solid #c4c7ca;border-bottom-color:#aeb4b9;border-radius:3px;"></div>
<div class="abs" style="left:798px;top:389.5px;width:70px;height:22px;background:#e4e5e7;border-radius:3px;"></div>
<div class="abs" style="left:881px;top:389.5px;width:69px;height:22px;background:#e4e5e7;border-radius:3px;"></div>
<div class="abs" style="left:963px;top:389.5px;width:82px;height:22px;background:#e4e5e7;border-radius:3px;"></div>
<svg class="abs" style="left:851px;top:395px" width="11" height="11" viewBox="0 0 11 11"><path d="M1 1 L10 10 M10 1 L1 10" stroke="#5c5f62" stroke-width="1.6"/></svg>
<svg class="abs" style="left:933px;top:395px" width="11" height="11" viewBox="0 0 11 11"><path d="M1 1 L10 10 M10 1 L1 10" stroke="#5c5f62" stroke-width="1.6"/></svg>
<svg class="abs" style="left:1028px;top:395px" width="11" height="11" viewBox="0 0 11 11"><path d="M1 1 L10 10 M10 1 L1 10" stroke="#5c5f62" stroke-width="1.6"/></svg>
<!-- card 2 clipped -->
<div class="abs" style="left:518px;top:440px;width:758px;height:282px;overflow:hidden;">
  <div class="abs" style="left:1px;top:1px;width:756px;height:320px;background:#fff;border-radius:8px;box-shadow:0 0 0 1px rgba(63,63,68,0.05),0 1px 3px 0 rgba(63,63,68,0.15);"></div>
  <div class="abs" style="left:1px;top:79px;width:756px;height:1px;background:#e1e3e5;"></div>
  <div class="abs" style="left:11px;top:77px;width:63px;height:3px;background:#0c46a3;border-radius:3px 3px 0 0;"></div>
  <div class="abs" style="left:1px;top:154px;width:756px;height:1px;background:#e1e3e5;"></div>
  <div class="abs" style="left:17.5px;top:210px;width:723.5px;height:29px;background:#fff;border:1px solid #c4c7ca;border-top-color:#aeb4b9;border-radius:3px;"></div>
  <div class="abs" style="left:17.5px;top:271.5px;width:723.5px;height:29px;background:#fff;border:1px solid #c4c7ca;border-top-color:#aeb4b9;border-radius:3px;"></div>
</div>
<div class="abs" style="left:536px;top:559px;width:15px;height:15px;background:#1b6fd9;border-radius:3px;"></div>
<svg class="abs" style="left:536px;top:559px" width="15" height="15" viewBox="0 0 15 15"><path d="M4 7.6 L6.4 10 L11 5.2" fill="none" stroke="#fff" stroke-width="1.8" stroke-linecap="round" stroke-linejoin="round"/></svg>
<div class="t" id="h1" style="left:631.00px;top:45.42px;font-size:31.4px;font-weight:400;color:#ffffff;letter-spacing:1.6px;transform:scaleX(0.9296);-webkit-text-stroke:1.2px #fff;">LANGUAGE SETTINGS</div>
<div class="t" id="h2" style="left:644.50px;top:816.84px;font-size:25px;font-weight:700;color:#ffffff;letter-spacing:0px;transform:scaleX(0.9448);">Support multiple languages</div>
<div class="t" id="logo" style="left:294.00px;top:169.72px;font-size:21.6px;font-weight:700;color:#0d4aa3;letter-spacing:0px;transform:scaleX(0.9801);">HKT Apps</div>
<div class="t" id="search" style="left:549.40px;top:175.34px;font-size:12px;font-weight:400;color:#5c5f62;letter-spacing:0px;transform:scaleX(0.9466);">Search</div>
<div class="t" id="explore" style="left:1115.80px;top:175.59px;font-size:12px;font-weight:400;color:#ffffff;letter-spacing:0px;transform:scaleX(0.9999);-webkit-text-stroke:0.4px #fff;">Explore pricing plans</div>
<div class="t" id="avatar" style="left:1280.80px;top:175.92px;font-size:12.5px;font-weight:400;color:#3b3b3b;letter-spacing:0px;">A</div>
<div class="t" id="welcome1" style="left:298.70px;top:221.78px;font-size:11.6px;font-weight:400;color:#2a2c2f;letter-spacing:0px;transform:scaleX(1.0417);-webkit-text-stroke:0.35px #2a2c2f;">Welcome to HKT: Order</div>
<div class="t" id="welcome2" style="left:298.70px;top:238.18px;font-size:11.6px;font-weight:400;color:#2a2c2f;letter-spacing:0px;transform:scaleX(1.0628);-webkit-text-stroke:0.35px #2a2c2f;">Printer</div>
<div class="t" id="ov" style="left:295.30px;top:282.04px;font-size:9.4px;font-weight:400;color:#6d7175;letter-spacing:0.6px;transform:scaleX(0.9244);-webkit-text-stroke:0.2px #6d7175;">OVERVIEW</div>
<div class="t" id="dash" style="left:327.70px;top:307.80px;font-size:11.7px;font-weight:400;color:#2a2c2f;letter-spacing:0px;transform:scaleX(1.0264);-webkit-text-stroke:0.35px #2a2c2f;">Dashboard</div>
<div class="t" id="pm" style="left:295.50px;top:352.04px;font-size:9.4px;font-weight:400;color:#6d7175;letter-spacing:0.6px;transform:scaleX(0.9499);-webkit-text-stroke:0.2px #6d7175;">PRIMARY MENU</div>
<div class="t" id="orders" style="left:327.80px;top:376.90px;font-size:11.7px;font-weight:400;color:#2a2c2f;letter-spacing:0px;transform:scaleX(1.0270);-webkit-text-stroke:0.35px #2a2c2f;">Orders</div>
<div class="t" id="draft" style="left:327.80px;top:403.80px;font-size:11.7px;font-weight:400;color:#2a2c2f;letter-spacing:0px;transform:scaleX(1.0567);-webkit-text-stroke:0.35px #2a2c2f;">Draft orders</div>
<div class="t" id="tmpl" style="left:327.80px;top:430.50px;font-size:11.7px;font-weight:400;color:#2a2c2f;letter-spacing:0px;transform:scaleX(1.0360);-webkit-text-stroke:0.35px #2a2c2f;">Templates</div>
<div class="t" id="integ" style="left:327.80px;top:457.30px;font-size:11.7px;font-weight:400;color:#2a2c2f;letter-spacing:0px;transform:scaleX(1.0642);-webkit-text-stroke:0.35px #2a2c2f;">Integrations</div>
<div class="t" id="sett" style="left:327.80px;top:484.10px;font-size:11.7px;font-weight:400;color:#2a2c2f;letter-spacing:0px;transform:scaleX(1.0655);-webkit-text-stroke:0.35px #2a2c2f;">Settings</div>
<div class="t" id="sett2" style="left:327.80px;top:510.80px;font-size:11.7px;font-weight:400;color:#868a8e;letter-spacing:0px;transform:scaleX(1.0300);">Settings</div>
<div class="t" id="trans2" style="left:327.80px;top:537.50px;font-size:11.7px;font-weight:400;color:#1a56b8;letter-spacing:0px;transform:scaleX(1.0200);">Translations</div>
<div class="t" id="sh" style="left:295.50px;top:587.79px;font-size:9.4px;font-weight:400;color:#6d7175;letter-spacing:0.6px;transform:scaleX(0.9458);-webkit-text-stroke:0.2px #6d7175;">SUPPORT &amp; HELP</div>
<div class="t" id="qs" style="left:327.80px;top:612.60px;font-size:11.7px;font-weight:400;color:#2a2c2f;letter-spacing:0px;transform:scaleX(1.0540);-webkit-text-stroke:0.35px #2a2c2f;">Quick support</div>
<div class="t" id="hc" style="left:327.80px;top:639.30px;font-size:11.7px;font-weight:400;color:#2a2c2f;letter-spacing:0px;transform:scaleX(1.0371);-webkit-text-stroke:0.35px #2a2c2f;">Help center</div>
<div class="t" id="lo" style="left:327.80px;top:681.30px;font-size:11.7px;font-weight:400;color:#2a2c2f;letter-spacing:0px;transform:scaleX(1.0490);-webkit-text-stroke:0.35px #2a2c2f;">Logout</div>
<div class="t" id="title" style="left:520.00px;top:225.78px;font-size:16.8px;font-weight:400;color:#2a2c2f;letter-spacing:0px;transform:scaleX(0.9859);-webkit-text-stroke:0.35px #2a2c2f;">Translations</div>
<div class="t" id="save" style="left:1236.70px;top:227.04px;font-size:12px;font-weight:400;color:#ffffff;letter-spacing:0px;transform:scaleX(0.9138);-webkit-text-stroke:0.4px #fff;">Save</div>
<div class="t" id="sl" style="left:519.50px;top:283.33px;font-size:13.2px;font-weight:400;color:#2a2c2f;letter-spacing:0px;transform:scaleX(1.0407);-webkit-text-stroke:0.35px #2a2c2f;">Supported languages</div>
<div class="t" id="d1" style="left:519.50px;top:314.52px;font-size:11.5px;font-weight:400;color:#868a8e;letter-spacing:0px;transform:scaleX(1.0262);">You can customize primary and supported</div>
<div class="t" id="d2" style="left:519.50px;top:330.77px;font-size:11.5px;font-weight:400;color:#868a8e;letter-spacing:0px;transform:scaleX(1.0277);">languages for your back in stock</div>
<div class="t" id="d3" style="left:519.50px;top:347.02px;font-size:11.5px;font-weight:400;color:#868a8e;letter-spacing:0px;transform:scaleX(1.0325);">widget/email</div>
<div class="t" id="c1h" style="left:798.60px;top:282.83px;font-size:13.2px;font-weight:400;color:#2a2c2f;letter-spacing:0px;transform:scaleX(1.0400);-webkit-text-stroke:0.35px #2a2c2f;">Supported languages</div>
<div class="t" id="jp" style="left:808.00px;top:336.87px;font-size:11.5px;font-weight:400;color:#202223;letter-spacing:0px;transform:scaleX(0.9925);">Japanese</div>
<div class="t" id="addl" style="left:1172.00px;top:336.54px;font-size:12px;font-weight:400;color:#202223;letter-spacing:0px;transform:scaleX(0.9814);-webkit-text-stroke:0.2px #202223;">Add language</div>
<div class="t" id="hint" style="left:798.60px;top:363.29px;font-size:11px;font-weight:400;color:#868a8e;letter-spacing:0px;transform:scaleX(1.0715);">Select your store support language</div>
<div class="t" id="tag1" style="left:805.00px;top:395.10px;font-size:11.7px;font-weight:400;color:#202223;letter-spacing:0px;transform:scaleX(0.9650);">English</div>
<div class="t" id="tag2" style="left:887.50px;top:395.10px;font-size:11.7px;font-weight:400;color:#202223;letter-spacing:0px;transform:scaleX(0.9548);">Korean</div>
<div class="t" id="tag3" style="left:969.50px;top:395.10px;font-size:11.7px;font-weight:400;color:#202223;letter-spacing:0px;transform:scaleX(0.9763);">Japanese</div>
<div class="t" id="c2h" style="left:536.40px;top:461.00px;font-size:13px;font-weight:400;color:#2a2c2f;letter-spacing:0px;transform:scaleX(1.0451);-webkit-text-stroke:0.35px #2a2c2f;">Translations</div>
<div class="t" id="tab1" style="left:542.00px;top:492.84px;font-size:12px;font-weight:400;color:#202223;letter-spacing:0px;transform:scaleX(0.9528);">English</div>
<div class="t" id="tab2" style="left:612.40px;top:492.84px;font-size:12px;font-weight:400;color:#868a8e;letter-spacing:0px;transform:scaleX(0.9302);">Korean</div>
<div class="t" id="tab3" style="left:681.00px;top:492.84px;font-size:12px;font-weight:400;color:#868a8e;letter-spacing:0px;transform:scaleX(0.9511);">Japanese</div>
<div class="t" id="prim" style="left:536.00px;top:537.70px;font-size:9.8px;font-weight:400;color:#2a2c2f;letter-spacing:0.3px;transform:scaleX(0.9449);-webkit-text-stroke:0.35px #2a2c2f;">PRIMARY LANGUAGE</div>
<div class="t" id="setdef" style="left:558.40px;top:560.84px;font-size:12px;font-weight:400;color:#202223;letter-spacing:0px;transform:scaleX(0.9674);">Set as default language</div>
<div class="t" id="gen" style="left:535.70px;top:613.10px;font-size:9.8px;font-weight:400;color:#2a2c2f;letter-spacing:0.3px;transform:scaleX(0.9195);-webkit-text-stroke:0.35px #2a2c2f;">GENERAL</div>
<div class="t" id="addrl" style="left:535.70px;top:633.00px;font-size:11.7px;font-weight:400;color:#202223;letter-spacing:0px;transform:scaleX(0.9792);">Address</div>
<div class="t" id="addrp" style="left:546.00px;top:658.70px;font-size:11.7px;font-weight:400;color:#3d3f42;letter-spacing:0px;transform:scaleX(0.9792);">Address</div>
<div class="t" id="phone" style="left:535.70px;top:694.40px;font-size:11.7px;font-weight:400;color:#202223;letter-spacing:0px;transform:scaleX(0.9468);">Phone</div>
</body></html>
